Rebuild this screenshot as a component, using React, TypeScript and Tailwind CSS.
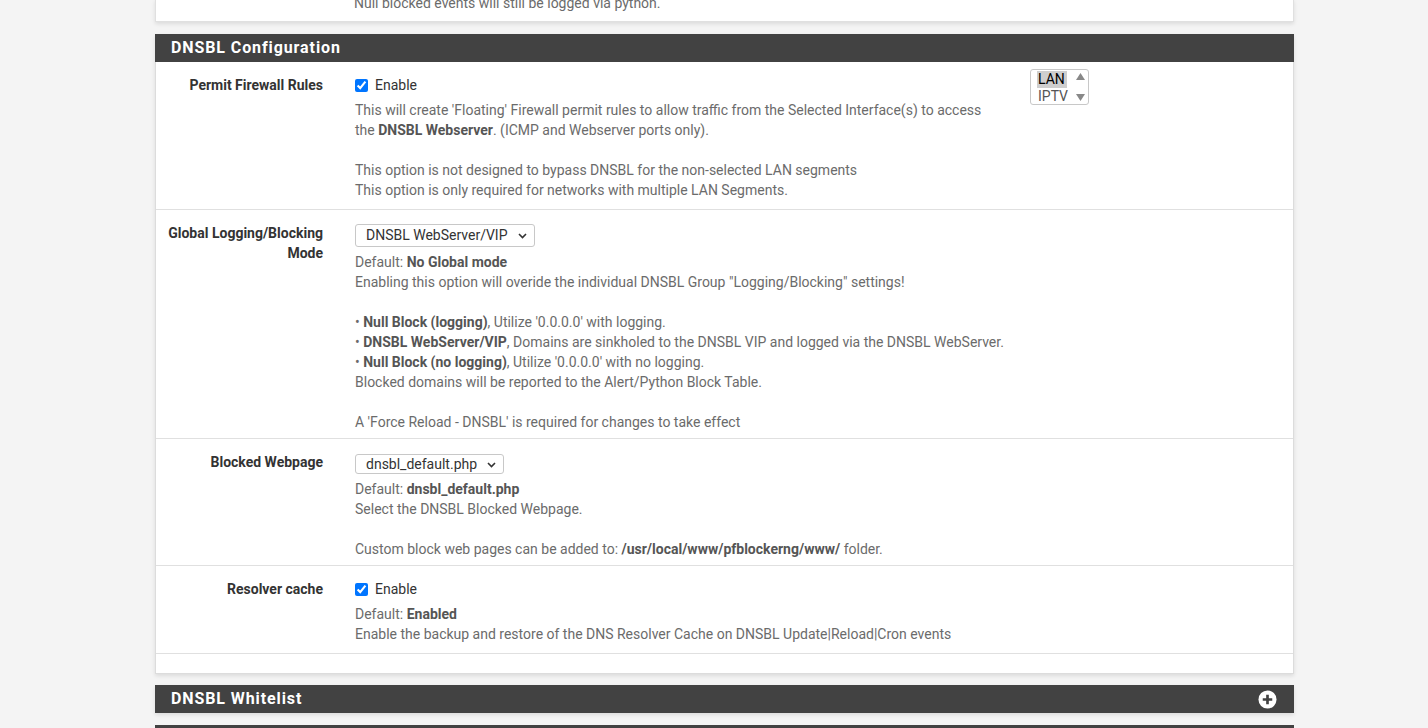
import React from "react";

function Select({ value, cls }: { value: string; cls: string }) {
  return (
    <div className={`${cls} flex w-fit items-center gap-[10px] rounded-[3px] border border-[#c8c8c8] bg-white pl-[10px] pr-[7px] text-[14px] text-[#333]`}>
      <span>{value}</span>
      <svg width="9" height="6" viewBox="0 0 9 6" className="mt-px">
        <path d="M1 1l3.5 3.5L8 1" fill="none" stroke="#333" strokeWidth="1.6" />
      </svg>
    </div>
  );
}

function Check() {
  return (
    <label className="flex h-5 items-center gap-[7px] text-[14px] text-[#333]">
      <input type="checkbox" checked readOnly className="m-0 h-[13px] w-[13px] accent-[#0075ff]" />
      <span>Enable</span>
    </label>
  );
}

function Row({ label, children, extra, pb }: { label: React.ReactNode; children: React.ReactNode; extra?: React.ReactNode; pb: string }) {
  return (
    <div className={`flex border-b border-[#e0e0e0] pt-[13px] ${pb}`}>
      <div className="w-[184px] shrink-0 pr-[17px] text-right text-[14px] font-bold leading-5 text-[#333]">{label}</div>
      <div className={extra ? "w-[675px] shrink-0 px-[15px]" : "flex-1 px-[15px]"}>{children}</div>
      {extra}
    </div>
  );
}

function Help({ children }: { children: React.ReactNode }) {
  return <div className="mt-[5px] text-[14px] leading-5 text-[#6b6b6b]">{children}</div>;
}

const B = ({ children }: { children: React.ReactNode }) => <b className="font-bold text-[#555]">{children}</b>;

export default function App() {
  return (
    <div className="min-h-screen bg-[#f4f4f4] font-['Roboto',sans-serif]">
      <div className="ml-[155px] w-[1139px]">
        <div className="h-[23px] -mt-px overflow-hidden border border-[#e0e0e0] bg-white shadow-[0_2px_4px_rgba(0,0,0,0.1)]">
          <div className="-mt-[7px] pl-[198px] text-[14px] leading-5 text-[#6b6b6b]">Null blocked events will still be logged via python.</div>
        </div>

        <div className="mt-[12px] border border-[#dcdcdc] bg-white shadow-[0_2px_4px_rgba(0,0,0,0.1)]">
          <div className="-mx-px -mt-px flex h-[28px] items-center bg-[#424242] pl-[16px] text-[16px] font-bold tracking-[0.9px] text-white">
            DNSBL Configuration
          </div>

          <Row
            pb="pb-[9px]"
            label="Permit Firewall Rules"
            extra={
              <div className="-mt-[6px] pl-[15px]">
                <div className="flex h-[36px] w-[59px] rounded-[3px] border border-[#c8c8c8] text-[14px] leading-[17px]">
                  <div className="flex-1 pl-[6px] pt-px">
                    <div className="w-[30px] bg-[#cecece] pl-px text-black">LAN</div>
                    <div className="pl-px text-[#555]">IPTV</div>
                  </div>
                  <div className="flex w-[14px] flex-col items-center justify-between py-[3px] pr-[2px]">
                    <svg width="9" height="7" viewBox="0 0 9 7"><path d="M4.5 0L9 7H0z" fill="#888" /></svg>
                    <svg width="9" height="7" viewBox="0 0 9 7"><path d="M0 0h9L4.5 7z" fill="#888" /></svg>
                  </div>
                </div>
              </div>
            }
          >
            <Check />
            <Help>
              This will create 'Floating' Firewall permit rules to allow traffic from the Selected Interface(s) to access
              <br />
              the <B>DNSBL Webserver</B>. (ICMP and Webserver ports only).
              <br />
              <br />
              This option is not designed to bypass DNSBL for the non-selected LAN segments
              <br />
              This option is only required for networks with multiple LAN Segments.
            </Help>
          </Row>

          <Row
            pb="pb-[6px]"
            label={
              <>
                Global Logging/Blocking
                <br />
                Mode
              </>
            }
          >
            <Select value="DNSBL WebServer/VIP" cls="mt-px h-[23px]" />
            <Help>
              Default: <B>No Global mode</B>
              <br />
              Enabling this option will overide the individual DNSBL Group "Logging/Blocking" settings!
              <br />
              <br />• <B>Null Block (logging)</B>, Utilize '0.0.0.0' with logging.
              <br />• <B>DNSBL WebServer/VIP</B>, Domains are sinkholed to the DNSBL VIP and logged via the DNSBL WebServer.
              <br />• <B>Null Block (no logging)</B>, Utilize '0.0.0.0' with no logging.
              <br />
              Blocked domains will be reported to the Alert/Python Block Table.
              <br />
              <br />
              A 'Force Reload - DNSBL' is required for changes to take effect
            </Help>
          </Row>

          <Row label="Blocked Webpage" pb="pb-[6px]">
            <Select value="dnsbl_default.php" cls="mt-[2px] h-[20px]" />
            <Help>
              Default: <B>dnsbl_default.php</B>
              <br />
              Select the DNSBL Blocked Webpage.
              <br />
              <br />
              Custom block web pages can be added to: <B>/usr/local/www/pfblockerng/www/</B> folder.
            </Help>
          </Row>

          <Row label="Resolver cache" pb="pb-[9px]">
            <Check />
            <Help>
              Default: <B>Enabled</B>
              <br />
              Enable the backup and restore of the DNS Resolver Cache on DNSBL Update|Reload|Cron events
            </Help>
          </Row>

          <div className="h-[19px]" />
        </div>

        <div className="mt-[11px] flex h-[28px] items-center justify-between bg-[#424242] pl-[16px] pr-[17px] text-[16px] font-bold tracking-[0.9px] text-white shadow-[0_2px_4px_rgba(0,0,0,0.1)]">
          <span>DNSBL Whitelist</span>
          <svg width="19" height="19" viewBox="0 0 20 20">
            <circle cx="10" cy="10" r="9.5" fill="#fff" />
            <path d="M10 5v10M5 10h10" stroke="#424242" strokeWidth="2.8" />
          </svg>
        </div>

        <div className="mt-[12px] h-[28px] bg-[#424242]" />
      </div>
    </div>
  );
}
